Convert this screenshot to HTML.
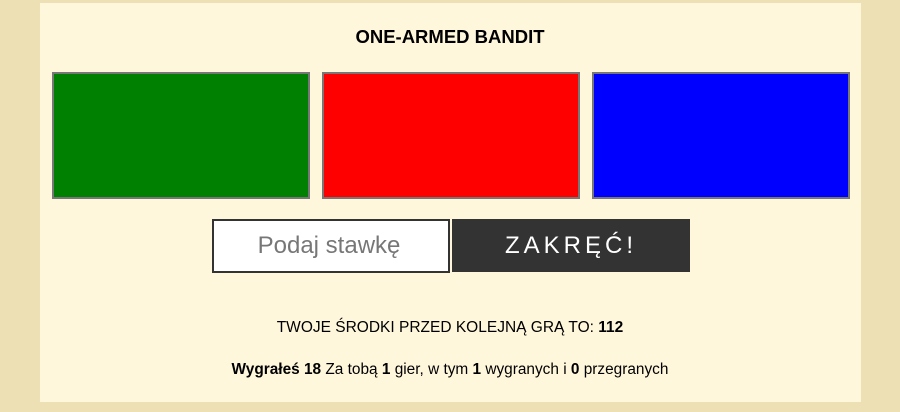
<!DOCTYPE html>
<html><head><meta charset="utf-8"><style>
body{margin:0;width:900px;height:412px;background:#ede0b5;font-family:"Liberation Sans",sans-serif;overflow:hidden;position:relative}
.p{position:absolute;left:40px;top:3px;width:821px;height:399px;background:#fff7dc}
.t{position:absolute;left:0;width:900px;text-align:center;color:#000}
.b{position:absolute;top:72px;height:123px;width:254px;border:2px solid #777;box-sizing:content-box}
</style></head><body>
<div class="p"></div>
<div class="t" style="top:26px;font-size:18.5px;font-weight:bold">ONE-ARMED BANDIT</div>
<div class="b" style="left:52px;background:#008000"></div>
<div class="b" style="left:322px;background:#f00"></div>
<div class="b" style="left:592px;background:#00f"></div>
<div style="position:absolute;left:212px;top:219px;width:230px;padding-right:4px;height:50px;border:2px solid #333;background:#fff;color:#777;font-size:24px;text-align:center;line-height:50px">Podaj stawkę</div>
<div style="position:absolute;left:452px;top:219px;width:238px;height:53px;background:#333;color:#fff;font-size:24px;letter-spacing:4px;text-align:center;line-height:53px">ZAKRĘĆ!</div>
<div class="t" style="top:319px;font-size:15.5px">TWOJE ŚRODKI PRZED KOLEJNĄ GRĄ TO: <b>112</b></div>
<div class="t" style="top:361px;font-size:15.4px"><b>Wygrałeś 18</b> Za tobą <b>1</b> gier, w tym <b>1</b> wygranych i <b>0</b> przegranych</div>
</body></html>
